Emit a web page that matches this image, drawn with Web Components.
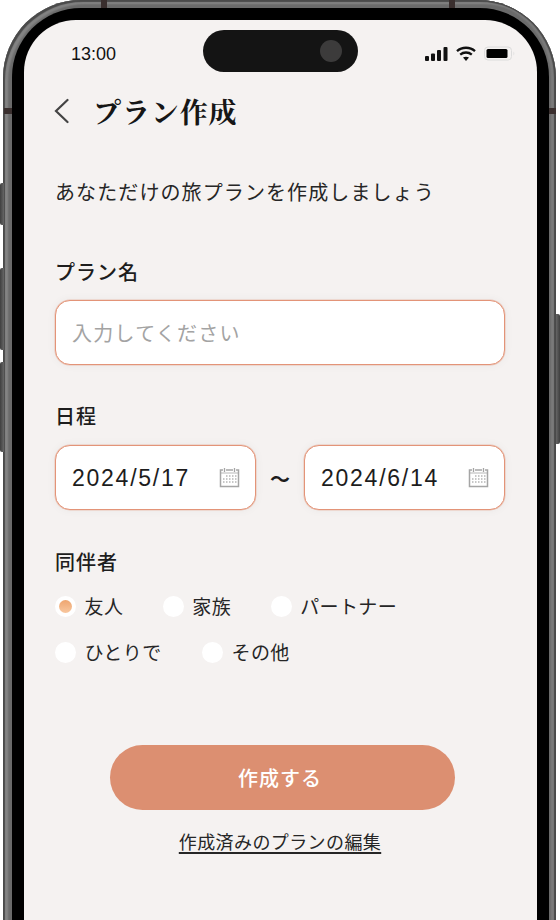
<!DOCTYPE html>
<html lang="ja">
<head>
<meta charset="utf-8">
<title>プラン作成</title>
<style>
  html, body { margin: 0; height: 920px; overflow: hidden; background: #fff; }
  body { font-family: "Noto Sans CJK JP", "Noto Sans", sans-serif; color: #1d1d1d; }
</style>
</head>
<body>
<phone-frame>
  <status-bar time="13:00"></status-bar>
  <page-header>プラン作成</page-header>
  <plan-form></plan-form>
</phone-frame>

<script>
class PhoneFrame extends HTMLElement {
  constructor() {
    super();
    this.attachShadow({ mode: 'open' });
    this.shadowRoot.innerHTML = `
      <style>
        :host { display: block; position: relative; width: 553px; height: 920px; margin-left: 3px; overflow-y: clip; }
        .metal {
          box-sizing: border-box; height: 1000px; padding: 8px 7px 0 9px;
          border-radius: 78px;
          background: #6a6a6a;
          box-shadow: inset 2px 2px 1px #4a4a4a, inset -2px 0 1px #4a4a4a, inset 5px 4px 2px #858585, inset -5px 0 2px #7c7c7c;
        }
        .bezel { box-sizing: border-box; height: 100%; padding: 12px; border-radius: 69px; background: #000; }
        .screen { position: relative; height: 100%; border-radius: 52px; background: #f5f2f1; overflow: hidden; }
        .island {
          position: absolute; left: 179px; top: 10px; width: 155px; height: 42px;
          border-radius: 21px; background: #141414;
        }
        .island i {
          position: absolute; right: 16px; top: 10px; width: 22px; height: 22px;
          border-radius: 50%; background: #3c3b3b;
        }
        .band { position: absolute; background: #3a2f2e; }
        .btn {
          position: absolute; width: 4px;
          background: linear-gradient(90deg, #3f3f3f, #666);
        }
        .btn.left { left: -3px; border-radius: 2px 0 0 2px; }
        .btn.right { right: -4px; border-radius: 0 2px 2px 0; background: linear-gradient(270deg, #3f3f3f, #666); }
      </style>
      <div class="metal">
        <div class="bezel">
          <div class="screen">
            <slot></slot>
            <div class="island"><i></i></div>
          </div>
        </div>
      </div>
      <div class="band" style="left:98px;top:0;width:6px;height:8px"></div>
      <div class="band" style="left:446px;top:0;width:6px;height:8px"></div>
      <div class="band" style="left:1px;top:108px;width:8px;height:6px"></div>
      <div class="band" style="right:0;top:108px;width:7px;height:6px"></div>
      <div class="btn left" style="top:183px;height:42px"></div>
      <div class="btn left" style="top:268px;height:82px"></div>
      <div class="btn left" style="top:362px;height:90px"></div>
      <div class="btn right" style="top:314px;height:130px"></div>
    `;
  }
}

class StatusBar extends HTMLElement {
  constructor() {
    super();
    this.attachShadow({ mode: 'open' });
    this.shadowRoot.innerHTML = `
      <style>
        :host { display: flex; align-items: center; justify-content: space-between; height: 68px; padding: 0 21px 0 47px; box-sizing: border-box; }
        .time { font: 18px/20px "Liberation Sans", Arial, sans-serif; color: #111; }
        .icons { display: flex; align-items: center; gap: 8px; position: relative; top: -1px; }
        svg { display: block; }
      </style>
      <span class="time">${this.getAttribute('time') || ''}</span>
      <div class="icons">
        <svg width="23" height="15" viewBox="0 0 23 15" fill="#111">
          <rect x="0" y="10" width="4" height="5" rx="1"/>
          <rect x="6" y="7.5" width="4" height="7.5" rx="1"/>
          <rect x="12" y="4" width="4" height="11" rx="1"/>
          <rect x="18.5" y="1" width="4" height="14" rx="1"/>
        </svg>
        <svg width="20" height="15" viewBox="0 0 20 15" fill="none" stroke="#111" stroke-width="2.3">
          <path d="M1 5.2c5-4.6 13-4.6 18 0"/>
          <path d="M4.2 8.6c3.3-2.8 8.3-2.8 11.6 0"/>
          <path d="M10 15l-3-3.400c1.700-1.300 4.300-1.300 6 0z" fill="#111" stroke="none"/>
        </svg>
        <svg width="32" height="15" viewBox="0 0 32 15">
          <rect x="0.500" y="1" width="27" height="13" rx="3.500" fill="none" stroke="#dcdcdc"/>
          <rect x="2.500" y="3" width="21" height="9" rx="1.500" fill="#000"/>
          <path d="M29.500 5.500c1 .4 1 3.600 0 4z" fill="#dcdcdc"/>
        </svg>
      </div>
    `;
  }
}

class PageHeader extends HTMLElement {
  constructor() {
    super();
    this.attachShadow({ mode: 'open' });
    this.shadowRoot.innerHTML = `
      <style>
        :host { display: flex; align-items: center; gap: 24px; height: 48px; padding-left: 30px; margin-top: -1px; margin-bottom: 1px; }
        svg { display: block; flex: none; }
        h1 { margin: 0; font: 700 28px/40px "Noto Serif CJK JP", "Noto Sans CJK JP", serif; letter-spacing: .9px; color: #161616; }
      </style>
      <svg width="15" height="26" viewBox="0 0 15 26" fill="none" stroke="#444" stroke-width="2.200" stroke-linecap="round"><path d="M13.500 2L2 13l11.500 11"/></svg>
      <h1><slot></slot></h1>
    `;
  }
}

class TextField extends HTMLElement {
  constructor() {
    super();
    this.attachShadow({ mode: 'open' });
    this.shadowRoot.innerHTML = `
      <style>
        :host {
          display: flex; align-items: center; box-sizing: border-box; height: 65px; padding: 0 16px;
          background: #fff; border: 1px solid #e39478; border-radius: 15px;
          box-shadow: 0 0 0 .5px rgba(229,160,135,.55), 0 0 10px rgba(0,0,0,.05);
          font-size: 20px; letter-spacing: 1.250px; color: #a3a3a3;
        }
      </style>
      <slot></slot>
    `;
  }
}

class DateField extends HTMLElement {
  constructor() {
    super();
    this.attachShadow({ mode: 'open' });
    this.shadowRoot.innerHTML = `
      <style>
        :host {
          display: flex; align-items: center; justify-content: space-between; box-sizing: border-box;
          width: 201px; height: 65px; padding: 2px 15px 0 16px;
          background: #fff; border: 1px solid #e39478; border-radius: 15px;
          box-shadow: 0 0 0 .5px rgba(229,160,135,.55), 0 0 10px rgba(0,0,0,.05);
          font: 23px "Liberation Sans", Arial, sans-serif; letter-spacing: 1.750px; color: #1d1d1d;
        }
        svg { display: block; flex: none; position: relative; top: -1px; }
      </style>
      <slot></slot>
      <svg width="21" height="21" viewBox="0 0 21 21" fill="none" stroke="#a5a5a5">
        <path d="M4 3H1.500v16.500h18V3H17M7 3h7" stroke-width="1.500"/>
        <path d="M5.500 1v4M15.500 1v4" stroke-width="1.300"/>
        <path d="M1.500 6h18" stroke-width=".8"/>
        <path d="M7 9h1.500M10 9h1.500M13 9h1.500M16 9h1.500M4 12h1.500M7 12h1.500M10 12h1.500M13 12h1.500M16 12h1.500M4 15h1.500M7 15h1.500M10 15h1.500M13 15h1.500M16 15h1.500" stroke-width="1.500" stroke="#b5b5b5"/>
      </svg>
    `;
  }
}

class RadioOption extends HTMLElement {
  constructor() {
    super();
    this.attachShadow({ mode: 'open' });
    this.shadowRoot.innerHTML = `
      <style>
        :host { display: inline-flex; align-items: center; gap: 8.500px; font-size: 19px; letter-spacing: .4px; color: #262626; line-height: 26px; }
        .dot {
          box-sizing: border-box; width: 21px; height: 21px; border-radius: 50%;
          background: #fff; display: flex; align-items: center; justify-content: center;
        }
        :host([checked]) .dot::after {
          content: ""; width: 13px; height: 13px; border-radius: 50%;
          background: linear-gradient(180deg, #eea56f, #f8c79f);
        }
      </style>
      <span class="dot"></span><slot></slot>
    `;
  }
}

class PrimaryButton extends HTMLElement {
  constructor() {
    super();
    this.attachShadow({ mode: 'open' });
    this.shadowRoot.innerHTML = `
      <style>
        :host {
          display: flex; align-items: center; justify-content: center; width: 345px; height: 65px;
          border-radius: 33px; background: #dc8f71; color: #fff;
          font-size: 20px; font-weight: 500; letter-spacing: 1px;
          margin-left: 5px;
        }
        span { margin-left: -5px; }
      </style>
      <span><slot></slot></span>
    `;
  }
}

class PlanForm extends HTMLElement {
  constructor() {
    super();
    this.attachShadow({ mode: 'open' });
    this.shadowRoot.innerHTML = `
      <style>
        :host { display: block; padding: 0 32px 0 31px; }
        p { margin: 0; font-size: 20px; line-height: 30px; letter-spacing: 1.100px; color: #262626; padding-top: 41px; }
        .label { font-size: 20px; font-weight: 500; line-height: 30px; letter-spacing: 1px; color: #1d1d1d; margin-bottom: 13px; }
        .name { margin-top: 50px; }
        .dates { margin-top: 36px; }
        .dates .label { margin-bottom: 14px; }
        .row { display: flex; align-items: center; justify-content: space-between; }
        .tilde { font-size: 20px; font-weight: 700; color: #1d1d1d; position: relative; top: 1px; }
        .who { margin-top: 37px; }
        .who .label { margin-bottom: 16px; }
        .radios { display: flex; flex-direction: column; gap: 20px; }
        .radios div { display: flex; }
        .actions { display: flex; flex-direction: column; align-items: center; margin-top: 80px; }
        a { margin-top: 18px; font-size: 18px; line-height: 27px; letter-spacing: .4px; color: #262626; text-decoration: underline 1.500px; text-underline-offset: 3px; }
      </style>
      <p>あなただけの旅プランを作成しましょう</p>
      <section class="name">
        <div class="label">プラン名</div>
        <text-field>入力してください</text-field>
      </section>
      <section class="dates">
        <div class="label">日程</div>
        <div class="row">
          <date-field>2024/5/17</date-field>
          <span class="tilde">～</span>
          <date-field>2024/6/14</date-field>
        </div>
      </section>
      <section class="who">
        <div class="label">同伴者</div>
        <div class="radios">
          <div style="gap:39.500px">
            <radio-option checked>友人</radio-option>
            <radio-option>家族</radio-option>
            <radio-option>パートナー</radio-option>
          </div>
          <div style="gap:40.500px">
            <radio-option>ひとりで</radio-option>
            <radio-option>その他</radio-option>
          </div>
        </div>
      </section>
      <div class="actions">
        <primary-button>作成する</primary-button>
        <a href="#">作成済みのプランの編集</a>
      </div>
    `;
  }
}

customElements.define('phone-frame', PhoneFrame);
customElements.define('status-bar', StatusBar);
customElements.define('page-header', PageHeader);
customElements.define('text-field', TextField);
customElements.define('date-field', DateField);
customElements.define('radio-option', RadioOption);
customElements.define('primary-button', PrimaryButton);
customElements.define('plan-form', PlanForm);
</script>
</body>
</html>
